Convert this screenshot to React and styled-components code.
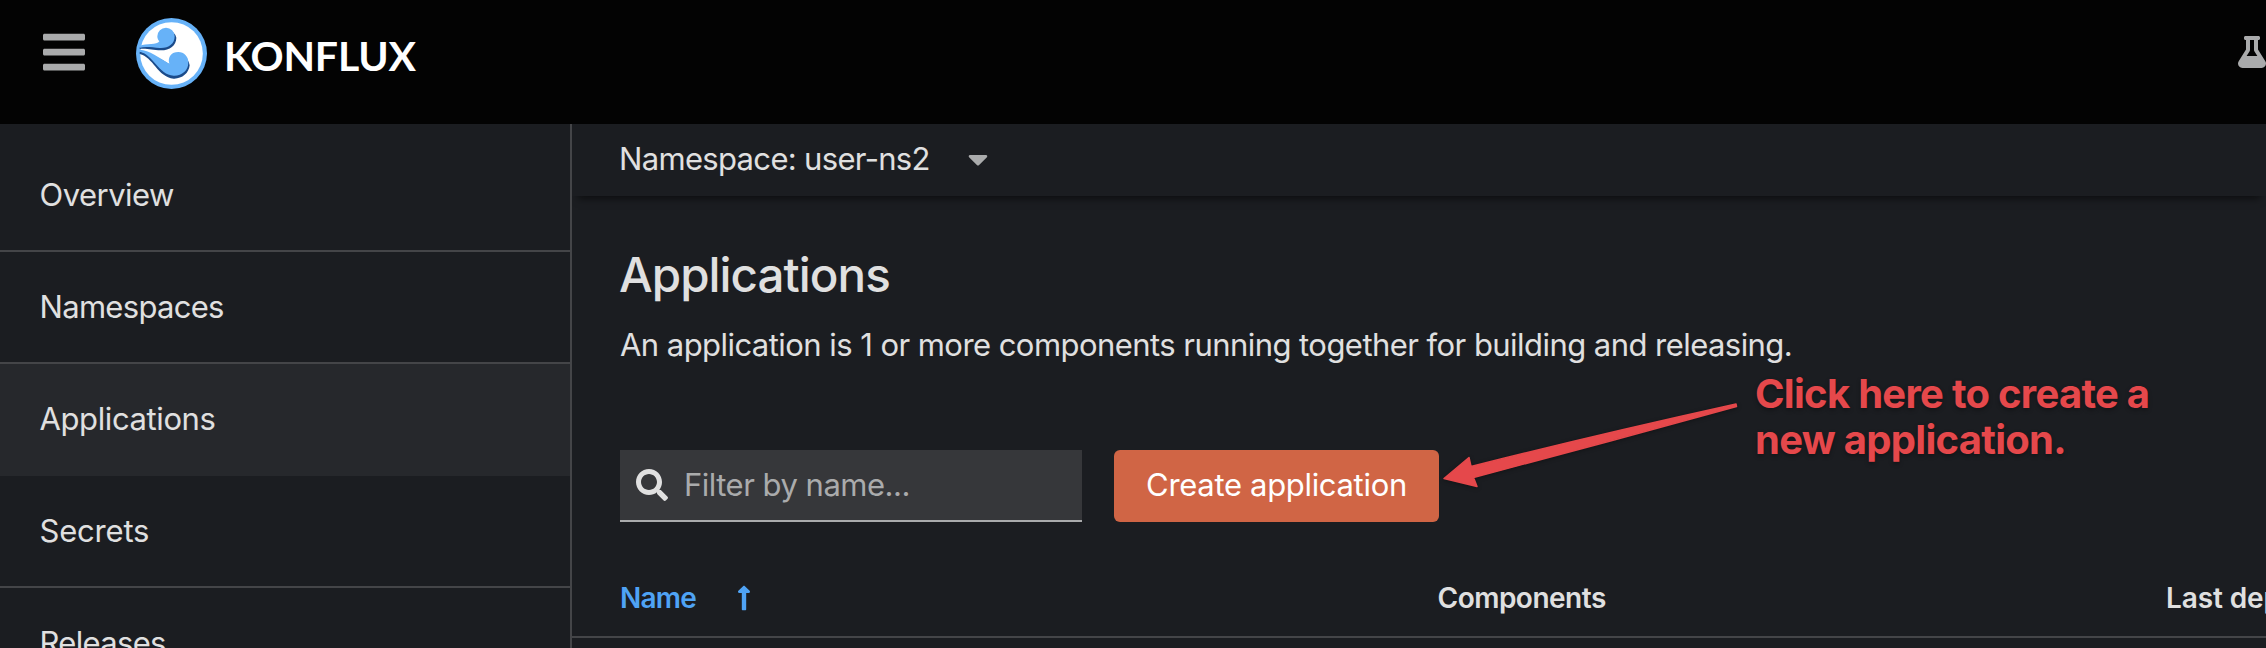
import React from 'react';
import styled, { createGlobalStyle } from 'styled-components';

const GlobalStyle = createGlobalStyle`
  *, *::before, *::after { box-sizing: border-box; }
  body { margin: 0; background: #1b1d21; overflow: hidden; }
`;

const Page = styled.div`
  position: relative;
  display: flex;
  flex-direction: column;
  width: 100%;
  height: 648px;
  overflow: hidden;
  background: #1b1d21;
  color: #e0e0e0;
  font: 400 31px/48px Inter, 'Liberation Sans', sans-serif;
  white-space: nowrap;
`;

const Masthead = styled.header`
  display: flex;
  align-items: flex-start;
  flex: none;
  height: 124px;
  background: #030303;
  color: #aaabac;
`;

const MenuButton = styled.button`
  display: flex;
  margin: 28px 51px 0 43px;
  padding: 0;
  border: 0;
  background: none;
  color: inherit;
`;

const Brand = styled.a`
  display: flex;
  align-items: flex-start;
  margin-top: 18px;
  color: #fff;
`;

const BrandName = styled.span`
  margin: 14px 0 0 17px;
  font: 700 41px/48px Lato, 'Liberation Sans', sans-serif;
  letter-spacing: -0.15px;
`;

const Tools = styled.div`
  display: flex;
  margin: 36px 0 0 auto;
`;

const Body = styled.div`
  display: flex;
  flex: 1;
  min-height: 0;
`;

const Sidebar = styled.nav`
  flex: none;
  width: 572px;
  padding-top: 16px;
  border-right: 2px solid #444548;
  overflow: hidden;
`;

const NavItem = styled.a`
  display: flex;
  align-items: center;
  height: 112px;
  padding-left: 39.5px;
  border-bottom: 2px solid ${(p) => (p.$current ? '#26282c' : '#444548')};
  background: ${(p) => (p.$current ? '#26282c' : 'transparent')};
  letter-spacing: ${(p) => p.$track}px;
`;

const Main = styled.main`
  flex: 1;
  min-width: 0;
  overflow: hidden;
`;

const NamespaceBar = styled.div`
  display: flex;
  align-items: center;
  gap: 38px;
  height: 72px;
  padding: 0 0 2px 47px;
  box-shadow: 0 8px 8px -6px rgba(3, 3, 3, 0.65);
  letter-spacing: -0.67px;
`;

const Section = styled.section`
  padding: 48px 0 0 48px;
`;

const Title = styled.h1`
  margin: 0 0 15px -1px;
  font-size: 47.5px;
  font-weight: 500;
  line-height: 62px;
  letter-spacing: -0.95px;
`;

const Description = styled.p`
  margin: 0 0 81px;
  letter-spacing: -0.55px;
`;

const Toolbar = styled.div`
  display: flex;
  gap: 32px;
  height: 72px;
`;

const SearchField = styled.label`
  display: flex;
  align-items: center;
  gap: 16px;
  width: 462px;
  padding-left: 16px;
  border-bottom: 2px solid #aaabac;
  background: #36373a;
`;

const SearchInput = styled.input`
  flex: 1;
  min-width: 0;
  height: 68px;
  padding: 0 0 1px;
  border: 0;
  outline: 0;
  background: none;
  color: #e0e0e0;
  font: inherit;
  letter-spacing: -0.5px;

  &::placeholder { color: #aaabac; opacity: 1; }
`;

const PrimaryButton = styled.button`
  width: 325px;
  padding: 0 0 2px;
  border: 0;
  border-radius: 6px;
  background: #d06545;
  color: #fff;
  font: inherit;
  letter-spacing: -0.32px;
`;

const TableHead = styled.div`
  display: grid;
  grid-template-columns: 817.5px 728.5px 1fr;
  align-items: center;
  height: 78px;
  margin: 38px 0 0 -48px;
  padding-left: 48px;
  border-bottom: 2px solid #444548;
  overflow: hidden;
`;

const HeadCell = styled.div`
  display: flex;
  align-items: center;
  gap: 41px;
  min-width: 0;
  color: ${(p) => (p.$sorted ? '#4fa3f5' : 'inherit')};
  font-size: 28px;
  font-weight: 600;
  letter-spacing: ${(p) => p.$track}px;
`;

const Annotation = styled.div`
  position: absolute;
  top: 371px;
  left: 1755px;
  color: #e5484b;
  font-size: 40px;
  font-weight: 700;
  line-height: 46px;
  letter-spacing: -0.72px;
  text-shadow: 0 2px 4px rgba(0, 0, 0, 0.35);
`;

const Arrow = styled.svg`
  position: absolute;
  top: 400px;
  left: 1440px;
  filter: drop-shadow(0 1px 2px rgba(0, 0, 0, 0.35));
`;

const BarsIcon = () => (
  <svg width="42" height="48" viewBox="0 0 448 512" fill="currentColor">
    <path d="M16 132h416c8.837 0 16-7.163 16-16V76c0-8.837-7.163-16-16-16H16C7.163 60 0 67.163 0 76v40c0 8.837 7.163 16 16 16zm0 160h416c8.837 0 16-7.163 16-16v-40c0-8.837-7.163-16-16-16H16c-8.837 0-16 7.163-16 16v40c0 8.837 7.163 16 16 16zm0 160h416c8.837 0 16-7.163 16-16v-40c0-8.837-7.163-16-16-16H16c-8.837 0-16 7.163-16 16v40c0 8.837 7.163 16 16 16z" />
  </svg>
);

const LogoIcon = () => (
  <svg width="71" height="71" viewBox="49 40 213 213">
    <circle cx="155.5" cy="146.5" r="106.5" fill="#67b2f8" />
    <circle cx="155.5" cy="146.5" r="94" fill="#fff" />
    <g fill="#1b4b8a">
      <path d="M60 128C80 123 112 130 124 114L120 97A26 26 0 0 1 170 99C170 122 150 137 124 137C98 137 84 131 60 133Z" />
      <path d="M60 141C88 142 120 160 153 181L152 171A31 31 0 0 1 210 182C208 206 186 223 162 222C114 218 100 156 60 148Z" />
    </g>
    <g fill="#67b2f8">
      <path d="M60 123C80 116 112 122 119 110C115 106 113 101 113 95A26 26 0 0 1 165 95C165 118 147 131 121 130C98 129 82 125 60 129Z" />
      <path d="M60 135C88 136 120 160 149 177C143 156 156 142 176 142A30 30 0 0 1 206 174C206 197 186 214 162 213C116 210 102 150 60 141Z" />
    </g>
  </svg>
);

const FlaskIcon = () => (
  <svg width="28" height="32" viewBox="0 0 448 512" fill="currentColor">
    <path d="M437.2 403.500L320 215V64h8c13.300 0 24-10.700 24-24V24c0-13.300-10.700-24-24-24H120c-13.300 0-24 10.700-24 24v16c0 13.300 10.700 24 24 24h8v151L10.800 403.500C-18.500 450.600 15.300 512 70.900 512h306.200c55.700 0 89.400-61.500 60.100-108.500zM137.900 320l48.200-77.600c3.700-5.200 5.800-11.600 5.800-18.400V64h64v160c0 6.900 2.200 13.200 5.800 18.400l48.200 77.600h-172z" />
  </svg>
);

const CaretIcon = () => (
  <svg width="20" height="32" viewBox="0 0 320 512" fill="#aaabac">
    <path d="M31.300 192h257.300c17.800 0 26.700 21.500 14.100 34.100L174.100 354.800c-7.800 7.800-20.500 7.800-28.300 0L17.200 226.100C4.600 213.500 13.500 192 31.300 192z" />
  </svg>
);

const SearchIcon = () => (
  <svg width="32" height="32" viewBox="0 0 512 512" fill="#e0e0e0">
    <path d="M505 442.700L405.300 343c-4.500-4.500-10.600-7-17-7H372c27.600-35.300 44-79.700 44-128C416 93.100 322.900 0 208 0S0 93.100 0 208s93.100 208 208 208c48.300 0 92.700-16.400 128-44v16.300c0 6.400 2.500 12.500 7 17l99.700 99.700c9.400 9.400 24.600 9.400 33.900 0l28.300-28.300c9.400-9.400 9.400-24.600.1-34zM208 336c-70.700 0-128-57.200-128-128 0-70.700 57.200-128 128-128 70.700 0 128 57.200 128 128 0 70.700-57.200 128-128 128z" />
  </svg>
);

const SortUpIcon = () => (
  <svg width="14" height="28" viewBox="0 0 256 512" fill="currentColor">
    <path d="M88 166.059V468c0 6.627 5.373 12 12 12h56c6.627 0 12-5.373 12-12V166.059h46.059c21.382 0 32.090-25.851 16.971-40.971l-86.059-86.059c-9.373-9.373-24.569-9.373-33.941 0l-86.059 86.059c-15.119 15.119-4.411 40.971 16.971 40.971H88z" />
  </svg>
);

const NAV = [
  { label: 'Overview', track: -0.51 },
  { label: 'Namespaces', track: -0.69 },
  { label: 'Applications', track: -0.39, current: true },
  { label: 'Secrets', track: -0.2 },
  { label: 'Releases', track: -0.67 },
];

export default function App() {
  return (
    <>
      <GlobalStyle />
      <Page>
        <Masthead>
          <MenuButton aria-label="Toggle navigation"><BarsIcon /></MenuButton>
          <Brand>
            <LogoIcon />
            <BrandName>KONFLUX</BrandName>
          </Brand>
          <Tools><FlaskIcon /></Tools>
        </Masthead>
        <Body>
          <Sidebar>
            {NAV.map((n) => (
              <NavItem key={n.label} $track={n.track} $current={n.current}>{n.label}</NavItem>
            ))}
          </Sidebar>
          <Main>
            <NamespaceBar>
              <span>Namespace: user-ns2</span>
              <CaretIcon />
            </NamespaceBar>
            <Section>
              <Title>Applications</Title>
              <Description>
                An application is 1 or more components running together for building and releasing.
              </Description>
              <Toolbar>
                <SearchField>
                  <SearchIcon />
                  <SearchInput placeholder="Filter by name..." />
                </SearchField>
                <PrimaryButton>Create application</PrimaryButton>
              </Toolbar>
              <TableHead>
                <HeadCell $sorted $track={-0.8}>Name <SortUpIcon /></HeadCell>
                <HeadCell $track={-0.5}>Components</HeadCell>
                <HeadCell $track={-0.1}>Last deployed</HeadCell>
              </TableHead>
            </Section>
          </Main>
        </Body>
        <Arrow width="300" height="92" viewBox="1440 400 300 92">
          <path
            d="M1444 478.500L1469 457.500L1471 466.500C1560 444 1650 423 1736 404L1736.500 406.500C1650 430 1560 455 1473.500 477.500L1477 486.500Z"
            fill="#e5484b"
            stroke="#e5484b"
            strokeWidth="1.500"
            strokeLinejoin="round"
          />
        </Arrow>
        <Annotation>
          Click here to create a<br />new application.
        </Annotation>
      </Page>
    </>
  );
}
